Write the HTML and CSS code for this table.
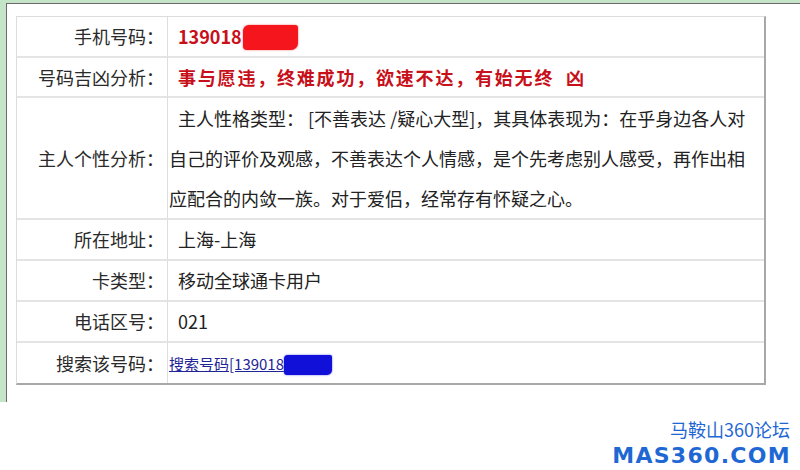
FILE: index.html
```html
<!DOCTYPE html>
<html lang="zh-CN">
<head>
    <meta charset="UTF-8">
    <title>手机号码查询</title>
    <link rel="stylesheet" href="styles.css">
</head>
<body>

    <div class="frame">
        <div class="inner">
            <table class="info">
                <tr class="r1">
                    <td class="label">手机号码：</td>
                    <td class="val hot">139018<span class="blot blot-red"></span></td>
                </tr>
                <tr class="r2">
                    <td class="label">号码吉凶分析：</td>
                    <td class="val hot wide">事与愿违，终难成功，欲速不达，有始无终&nbsp;&nbsp;凶</td>
                </tr>
                <tr class="r3">
                    <td class="label">主人个性分析：</td>
                    <td class="val multi">主人性格类型： [不善表达 /疑心大型]，其具体表现为：在乎身边各人对<br>自己的评价及观感，不善表达个人情感，是个先考虑别人感受，再作出相<br>应配合的内敛一族。对于爱侣，经常存有怀疑之心。</td>
                </tr>
                <tr>
                    <td class="label">所在地址：</td>
                    <td class="val">上海-上海</td>
                </tr>
                <tr>
                    <td class="label">卡类型：</td>
                    <td class="val">移动全球通卡用户</td>
                </tr>
                <tr>
                    <td class="label">电话区号：</td>
                    <td class="val">021</td>
                </tr>
                <tr class="last">
                    <td class="label">搜索该号码：</td>
                    <td class="val plain"><a href="#">搜索号码[139018<span class="blot blot-blue"></span></a></td>
                </tr>
            </table>
        </div>
    </div>

    <div class="mark">
        <div class="mark-cn">马鞍山360论坛</div>
        <div class="mark-en">MAS360.COM</div>
    </div>

</body>
</html>
```

FILE: styles.css
```css
body {
    margin: 0;
    padding: 0;
    background: #fff;
    font-family: "Noto Sans CJK SC", "Noto Sans", sans-serif;
    color: #222;
}

.frame {
    border-top: 3px solid #c4e5c8;
    border-left: 6px solid #c4e5c8;
    height: 399px;
}

.inner {
    box-sizing: border-box;
    height: 399px;
    border-top: 1px solid #6b6b6b;
    border-left: 1px solid #6b6b6b;
    padding: 12px 0 0 9px;
}

.info {
    width: 750px;
    table-layout: fixed;
    border-collapse: separate;
    border-spacing: 0;
    border-top: 1px solid #dcdcdc;
    border-left: 1px solid #dcdcdc;
    border-right: 2px solid #a8a8a8;
    border-bottom: 2px solid #a8a8a8;
    font-size: 18px;
}

.info td {
    padding: 0;
    height: 39px;
    line-height: 39px;
    border-bottom: 2px solid #e4e4e4;
    vertical-align: middle;
}

.info .r2 td {
    height: 38px;
    line-height: 38px;
}

.info .r3 td {
    height: 118px;
}

.info .last td {
    border-bottom: none;
}

.label {
    width: 147px;
    padding-right: 3px !important;
    text-align: right;
    color: #2a2a2a;
    border-right: 1px solid #dedede;
    white-space: nowrap;
}

.val {
    padding-left: 1px !important;
    text-indent: 9px;
    white-space: nowrap;
}

.val.multi {
    line-height: 40px !important;
    color: #222;
}

.val.plain {
    text-indent: 0;
}

.hot {
    color: #c8101a;
    font-weight: bold;
}

.hot.wide {
    letter-spacing: 1.8px;
}

.val a {
    color: #1f2596;
    font-size: 15px;
    text-decoration: underline;
}

.blot {
    display: inline-block;
    text-indent: 0;
}

.blot-red {
    width: 55px;
    height: 25px;
    margin-left: 1px;
    vertical-align: -6px;
    background: #f4161c;
    border-radius: 6px 3px 7px 4px;
    box-shadow: 0 0 2px #f86060;
}

.blot-blue {
    width: 48px;
    height: 20px;
    vertical-align: -5px;
    background: #1010d8;
    border-radius: 4px 2px 5px 3px;
    box-shadow: 0 0 2px #5a5ae8;
}

.mark {
    text-align: right;
    padding: 16px 10px 0 0;
    color: #1f68d4;
}

.mark-cn {
    font-size: 18px;
    line-height: 22px;
}

.mark-en {
    font-family: "DejaVu Sans", sans-serif;
    font-weight: bold;
    font-size: 22px;
    line-height: 22px;
    margin-top: 5px;
    letter-spacing: 1.3px;
    margin-right: -1px;
}
```
